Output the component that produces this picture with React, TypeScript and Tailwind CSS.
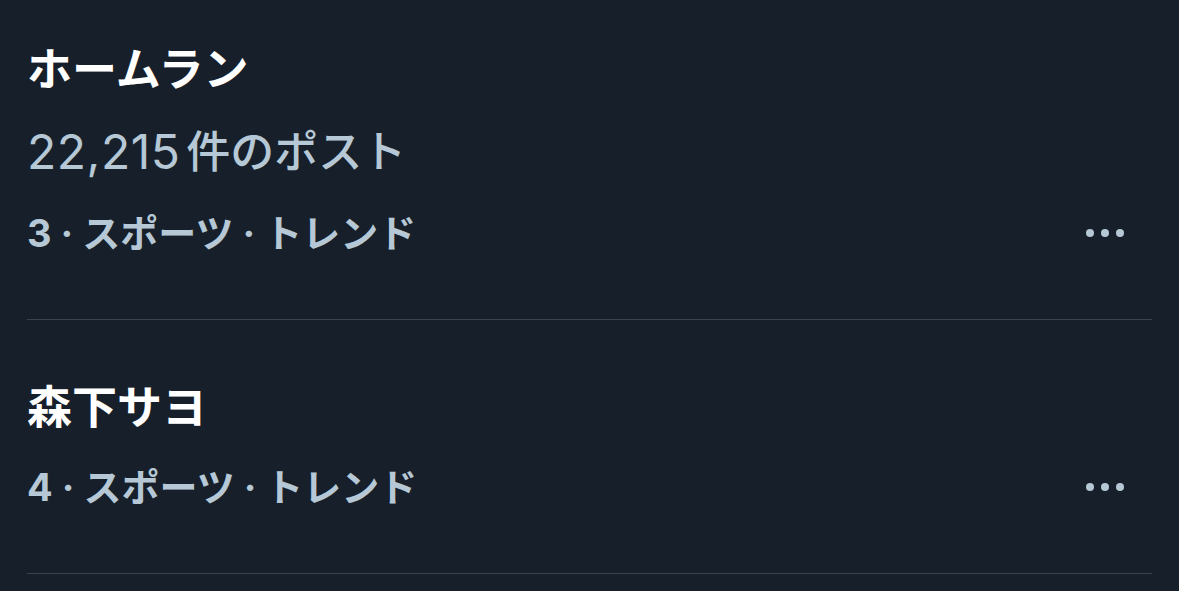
type Trend = {
  title: string;
  count?: string;
  meta: string;
};

const trends: Trend[] = [
  { title: "ホームラン", count: "22,215", meta: "3 · スポーツ · トレンド" },
  { title: "森下サヨ", meta: "4 · スポーツ · トレンド" },
];

function Dots() {
  return (
    <div className="flex items-center gap-[7px] mr-[28px]">
      <span className="h-[8px] w-[8px] rounded-full bg-[#b6c8d6]" />
      <span className="h-[8px] w-[8px] rounded-full bg-[#b6c8d6]" />
      <span className="h-[8px] w-[8px] rounded-full bg-[#b6c8d6]" />
    </div>
  );
}

export default function App() {
  return (
    <div
      className="h-[591px] w-full overflow-hidden bg-[#17202a]"
      style={{ fontFamily: 'Inter, "Noto Sans CJK JP", sans-serif' }}
    >
      {trends.map((t, i) => (
        <div
          key={t.title}
          className={`mx-[27px] border-b border-[#38444d] pb-[47px] ${i === 0 ? "pt-[30px]" : "pt-[48px]"}`}
        >
          <div className="h-[80px] text-[45px] font-bold leading-[80px] text-white">{t.title}</div>
          {t.count && (
            <div className="flex h-[84px] items-center gap-[6px] font-medium text-[#b6c8d6]">
              <span className="text-[48px] font-normal tracking-[0.5px]">{t.count}</span>
              <span className="text-[44px]">件のポスト</span>
            </div>
          )}
          <div className="flex h-[78px] items-center justify-between">
            <span className="text-[38px] font-bold text-[#b6c8d6]">{t.meta}</span>
            <Dots />
          </div>
        </div>
      ))}
    </div>
  );
}
